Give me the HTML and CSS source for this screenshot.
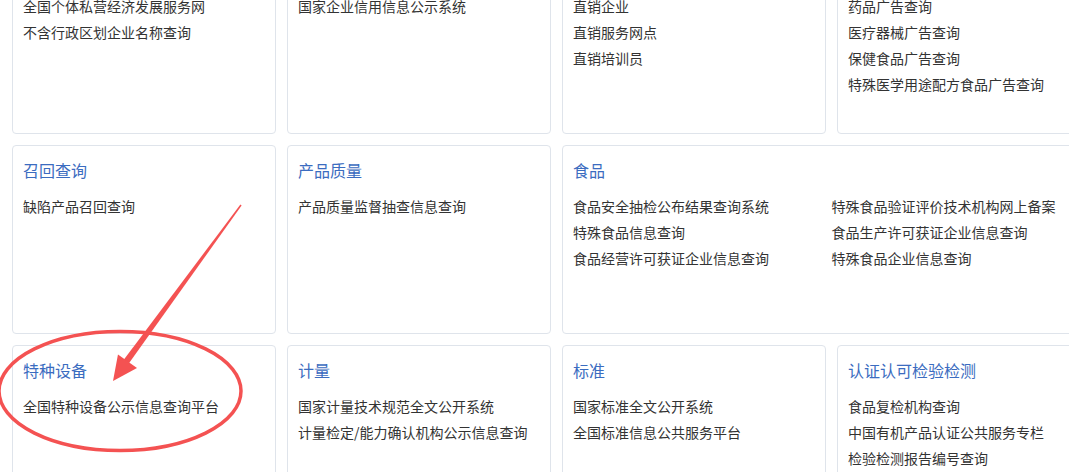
FILE: index.html
```html
<!DOCTYPE html>
<html lang="zh-CN">
<head>
    <meta charset="UTF-8">
    <meta name="viewport" content="width=device-width, initial-scale=1.0">
    <title>查询服务</title>
    <link rel="stylesheet" href="styles.css">
</head>
<body>
    <div class="page">
        <div class="grid">
            <div class="card">
                <h3 class="card-title">企业</h3>
                <a class="link">全国个体私营经济发展服务网</a>
                <a class="link">不含行政区划企业名称查询</a>
            </div>
            <div class="card">
                <h3 class="card-title">信用</h3>
                <a class="link">国家企业信用信息公示系统</a>
            </div>
            <div class="card">
                <h3 class="card-title">直销</h3>
                <a class="link">直销企业</a>
                <a class="link">直销服务网点</a>
                <a class="link">直销培训员</a>
            </div>
            <div class="card">
                <h3 class="card-title">广告</h3>
                <a class="link">药品广告查询</a>
                <a class="link">医疗器械广告查询</a>
                <a class="link">保健食品广告查询</a>
                <a class="link">特殊医学用途配方食品广告查询</a>
            </div>

            <div class="card">
                <h3 class="card-title">召回查询</h3>
                <a class="link">缺陷产品召回查询</a>
            </div>
            <div class="card">
                <h3 class="card-title">产品质量</h3>
                <a class="link">产品质量监督抽查信息查询</a>
            </div>
            <div class="card card-wide">
                <h3 class="card-title">食品</h3>
                <div class="link-cols">
                    <a class="link">食品安全抽检公布结果查询系统</a>
                    <a class="link">特殊食品验证评价技术机构网上备案</a>
                    <a class="link">特殊食品信息查询</a>
                    <a class="link">食品生产许可获证企业信息查询</a>
                    <a class="link">食品经营许可获证企业信息查询</a>
                    <a class="link">特殊食品企业信息查询</a>
                </div>
            </div>

            <div class="card">
                <h3 class="card-title">特种设备</h3>
                <a class="link">全国特种设备公示信息查询平台</a>
            </div>
            <div class="card">
                <h3 class="card-title">计量</h3>
                <a class="link">国家计量技术规范全文公开系统</a>
                <a class="link">计量检定/能力确认机构公示信息查询</a>
            </div>
            <div class="card">
                <h3 class="card-title">标准</h3>
                <a class="link">国家标准全文公开系统</a>
                <a class="link">全国标准信息公共服务平台</a>
            </div>
            <div class="card">
                <h3 class="card-title">认证认可检验检测</h3>
                <a class="link">食品复检机构查询</a>
                <a class="link">中国有机产品认证公共服务专栏</a>
                <a class="link">检验检测报告编号查询</a>
            </div>
        </div>

        <!-- red markup drawn over the screenshot -->
        <svg class="markup" width="1069" height="472" viewBox="0 0 1069 472">
            <ellipse cx="120" cy="391" rx="121" ry="59.5" fill="none" stroke="#f45252" stroke-width="3.5"/>
            <polygon points="240.4,204.5 241.6,205.5 128.6,363.8 123.4,360.2" fill="#f45252"/>
            <polygon points="113,381 118,354.5 137,368" fill="#f45252"/>
        </svg>
    </div>
</body>
</html>
```

FILE: styles.css
```css
* {
    margin: 0;
    padding: 0;
    box-sizing: border-box;
}

body {
    background-color: #ffffff;
    font-family: "Microsoft YaHei", "Noto Sans CJK SC", "Noto Sans", sans-serif;
    color: #333333;
    overflow: hidden;
}

.page {
    position: relative;
    width: 1069px;
    height: 472px;
    overflow: hidden;
}

.grid {
    display: grid;
    grid-template-columns: repeat(4, 264px);
    grid-auto-rows: 189px;
    gap: 11px;
    margin-top: -55px;
    padding-left: 12px;
    width: 1120px;
}

.card {
    border: 1px solid #dfe4eb;
    border-radius: 4px;
    padding: 14px 10px;
    display: flex;
    flex-direction: column;
    align-items: flex-start;
}

.card-wide {
    grid-column: span 2;
}

.card-title {
    font-size: 16px;
    font-weight: normal;
    line-height: 20px;
    color: #3b6cc0;
    margin-bottom: 13px;
}

.link {
    font-size: 14px;
    line-height: 26px;
    color: #333333;
    white-space: nowrap;
    text-decoration: none;
}

.link-cols {
    display: grid;
    grid-template-columns: 1fr 1fr;
    width: 100%;
}

.markup {
    position: absolute;
    top: 0;
    left: 0;
    pointer-events: none;
}
```
